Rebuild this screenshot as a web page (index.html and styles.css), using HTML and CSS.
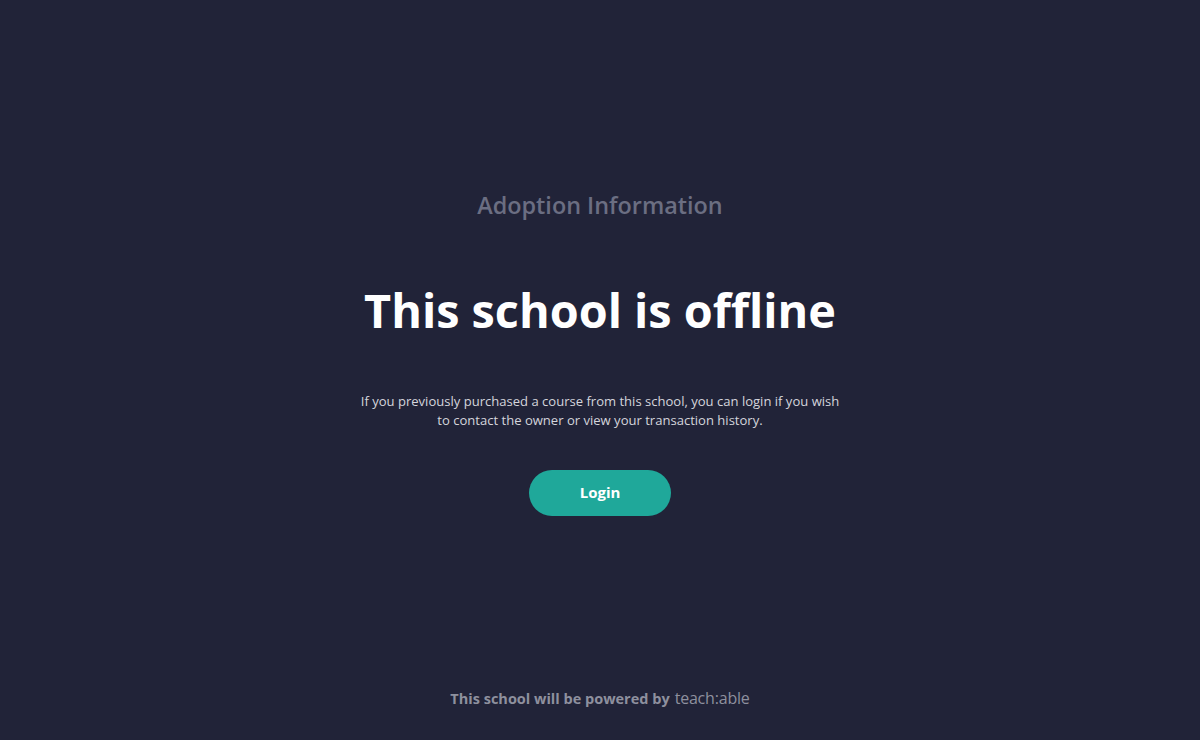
FILE: index.html
```html
<!DOCTYPE html>
<html lang="en">
<head>
<meta charset="utf-8">
<title>This school is offline</title>
<link rel="stylesheet" href="styles.css">
</head>
<body>
<main class="page">
  <section class="content">
    <h2 class="school-name">Adoption Information</h2>
    <h1 class="title">This school is offline</h1>
    <p class="message">If you previously purchased a course from this school, you can login if you wish to contact the owner or view your transaction history.</p>
    <a class="login-btn" href="#">Login</a>
  </section>
  <footer class="footer">
    <span class="powered">This school will be powered by</span>
    <span class="brand">teach<span class="colon">:</span>able</span>
  </footer>
</main>
</body>
</html>
```
FILE: styles.css
```css
html, body {
  margin: 0;
  padding: 0;
  height: 100%;
}
body {
  background: #212338;
  font-family: "Open Sans", "Noto Sans", sans-serif;
  color: #ffffff;
}
.page {
  height: 740px;
  display: flex;
  flex-direction: column;
  align-items: center;
}
.content {
  display: flex;
  flex-direction: column;
  align-items: center;
  padding-top: 190px;
}
.school-name {
  margin: 0;
  font-size: 23.4px;
  line-height: 30px;
  font-weight: 600;
  color: #6b6e82;
}
.title {
  margin: 60px 0 0;
  font-size: 46.8px;
  line-height: 60px;
  font-weight: 700;
  color: #ffffff;
}
.message {
  margin: 52px 0 0;
  width: 484px;
  text-align: center;
  font-size: 13.05px;
  line-height: 19px;
  color: #d4d5dc;
}
.login-btn {
  margin-top: 40px;
  width: 142px;
  height: 46px;
  padding-bottom: 3px;
  box-sizing: border-box;
  border-radius: 23px;
  background: #1fa89a;
  color: #ffffff;
  font-weight: 700;
  font-size: 15px;
  text-decoration: none;
  display: flex;
  align-items: center;
  justify-content: center;
}
.footer {
  margin-top: auto;
  margin-bottom: 31px;
  display: flex;
  align-items: baseline;
  gap: 5px;
  color: #8e909e;
}
.powered {
  font-size: 14.5px;
  font-weight: 700;
}
.brand {
  font-size: 16px;
  font-weight: 400;
  letter-spacing: -0.2px;
}
```
